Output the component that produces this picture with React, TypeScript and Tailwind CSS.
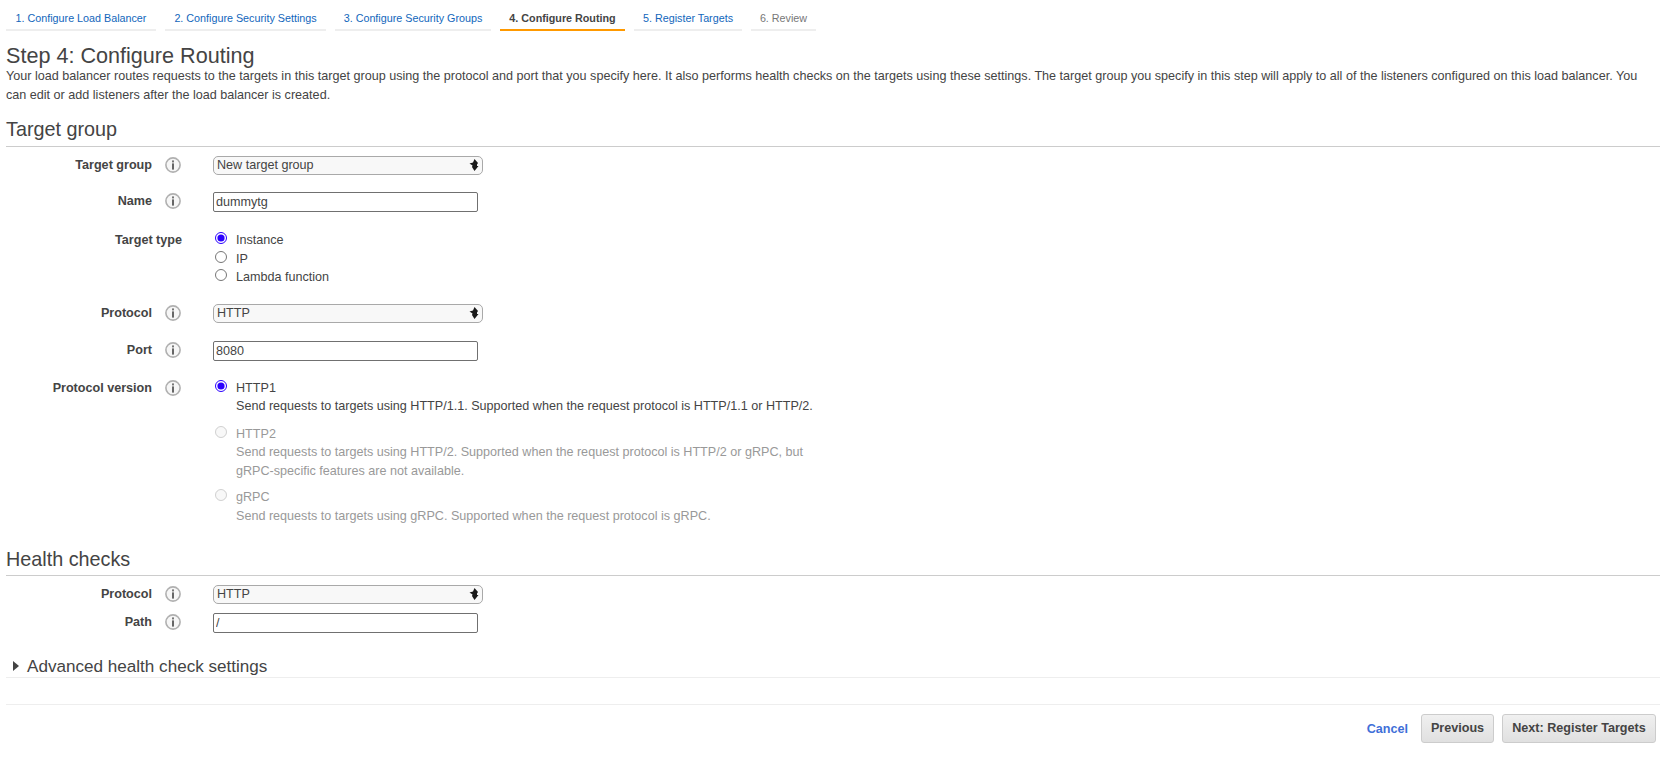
import type { ReactNode } from "react";

const tabs = [
  { label: "1. Configure Load Balancer", width: "w-[150px]" },
  { label: "2. Configure Security Settings", width: "w-[161px]" },
  { label: "3. Configure Security Groups", width: "w-[156px]" },
  { label: "4. Configure Routing", width: "w-[125px]", active: true },
  { label: "5. Register Targets", width: "w-[108px]" },
  { label: "6. Review", width: "w-[65px]", disabled: true },
];

function InfoIcon() {
  return (
    <svg width="16" height="16" viewBox="0 0 16 16" className="shrink-0">
      <circle cx="8" cy="8" r="7.1" fill="#f6f6f6" stroke="#b0b0b0" strokeWidth="1.6" />
      <rect x="7" y="3.4" width="2" height="2" fill="#777777" />
      <rect x="7" y="6.4" width="2" height="6.2" fill="#666666" />
    </svg>
  );
}

function Label({ text, info = true }: { text: string; info?: boolean }) {
  return (
    <div className="flex w-[207px] shrink-0 items-start">
      <span className={`${info ? "w-[146px]" : "w-[176px]"} text-right text-[12.6px] leading-[18px] font-bold`}>{text}</span>
      {info && (
        <span className="ml-[13px] mt-[1px]">
          <InfoIcon />
        </span>
      )}
    </div>
  );
}

function Select({ value }: { value: string }) {
  return (
    <div className="relative h-[19px] w-[270px]">
      <select
        value={value}
        onChange={() => {}}
        className="block h-full w-full appearance-none rounded-[5px] border border-[#a9a9a9] bg-[#f8f8f8] pl-[3px] text-[12.6px] leading-[15px] text-[#444444]"
      >
        <option>{value}</option>
      </select>
      {/* native up/down arrow */}
      <svg width="10" height="12" viewBox="0 0 10 12" className="pointer-events-none absolute right-[4px] top-[3px]">
        <path d="M5.5 0 L9 4 L8 5.5 L8 7 L9.5 7 L5.5 12 L3 8 L3.5 6.5 L0.5 4.5 L4 3.5 Z" fill="#1a1a1a" />
      </svg>
    </div>
  );
}

function TextInput({ value }: { value: string }) {
  return (
    <input
      value={value}
      readOnly
      className="h-[20px] w-[265px] rounded-[2px] border border-[#707070] bg-white px-[2px] text-[12.6px] text-[#444444] outline-none"
    />
  );
}

function Radio({ checked, disabled, children }: { checked?: boolean; disabled?: boolean; children: ReactNode }) {
  return (
    <label className={`flex items-start ${disabled ? "text-[#999999]" : ""}`}>
      <input
        type="radio"
        checked={!!checked}
        disabled={disabled}
        readOnly
        className="ml-[2px] mr-[9px] mt-[1px] h-[12px] w-[12px] shrink-0 accent-[#2a00ff]"
      />
      <div className="text-[12.6px] leading-[18.5px]">{children}</div>
    </label>
  );
}

export default function App() {
  return (
    <div className="h-[758px] overflow-hidden bg-white pl-[6px] pr-[4px] text-[#444444] [font-family:'Liberation_Sans',Arial,sans-serif]">
      {/* Wizard steps */}
      <div className="flex gap-[9px] pt-[10px]">
        {tabs.map((t) => (
          <div
            key={t.label}
            className={`h-[21px] pt-[1px] text-center text-[10.75px] leading-[15px] whitespace-nowrap border-b-2 ${t.width} ${
              t.active
                ? "border-[#ff9900] font-bold text-[#444444]"
                : t.disabled
                  ? "border-[#eeeeee] text-[#777777]"
                  : "border-[#eeeeee] text-[#1166bb]"
            }`}
          >
            {t.label}
          </div>
        ))}
      </div>

      <h1 className="mt-[13px] text-[21.6px] leading-[23px] font-normal">Step 4: Configure Routing</h1>
      <p className="text-[12.6px] leading-[18.5px]">
        Your load balancer routes requests to the targets in this target group using the protocol and port that you specify here. It also performs health checks on the targets using these settings. The target group you specify in this step will apply to all of the listeners configured on this load balancer. You can edit or add listeners after the load balancer is created.
      </p>

      <h2 className="mt-[12px] border-b border-[#cccccc] pb-[3px] text-[19.8px] leading-[27px] font-normal">Target group</h2>

      <div className="mt-[9px] flex">
        <Label text="Target group" />
        <Select value="New target group" />
      </div>
      <div className="mt-[17px] flex">
        <Label text="Name" />
        <TextInput value="dummytg" />
      </div>
      <div className="mt-[19px] flex">
        <Label text="Target type" info={false} />
        <div className="flex flex-col">
          <Radio checked>Instance</Radio>
          <Radio>IP</Radio>
          <Radio>Lambda function</Radio>
        </div>
      </div>
      <div className="mt-[17px] flex">
        <Label text="Protocol" />
        <Select value="HTTP" />
      </div>
      <div className="mt-[18px] flex">
        <Label text="Port" />
        <TextInput value="8080" />
      </div>
      <div className="mt-[18px] flex">
        <Label text="Protocol version" />
        <div className="flex flex-col">
          <Radio checked>
            HTTP1
            <br />
            Send requests to targets using HTTP/1.1. Supported when the request protocol is HTTP/1.1 or HTTP/2.
          </Radio>
          <div className="mt-[9px]">
            <Radio disabled>
              HTTP2
              <br />
              Send requests to targets using HTTP/2. Supported when the request protocol is HTTP/2 or gRPC, but
              <br />
              gRPC-specific features are not available.
            </Radio>
          </div>
          <div className="mt-[8px]">
            <Radio disabled>
              gRPC
              <br />
              Send requests to targets using gRPC. Supported when the request protocol is gRPC.
            </Radio>
          </div>
        </div>
      </div>

      <h2 className="mt-[21px] border-b border-[#cccccc] pb-[2px] text-[19.8px] leading-[27px] font-normal">Health checks</h2>
      <div className="mt-[9px] flex">
        <Label text="Protocol" />
        <Select value="HTTP" />
      </div>
      <div className="mt-[9px] flex">
        <Label text="Path" />
        <TextInput value="/" />
      </div>

      <div className="mt-[24px] flex items-center border-b border-[#eeeeee] text-[17.1px] leading-[20px]">
        <svg width="8" height="10" viewBox="0 0 8 10" className="ml-[6px] mr-[7px] -mt-[2px]">
          <path d="M1 0 L7 5 L1 10 Z" fill="#444444" />
        </svg>
        Advanced health check settings
      </div>

      {/* Footer actions */}
      <div className="mt-[26px] flex items-center justify-end gap-[8px] border-t border-[#eeeeee] pt-[9px]">
        <a className="text-[12.6px] leading-[18px] font-bold text-[#3f6fd8]">Cancel</a>
        <button className="ml-[5px] h-[29px] w-[73px] rounded-[3px] border border-[#cccccc] bg-gradient-to-b from-[#f0f0f0] to-[#e0e0e0] text-[12.6px] font-bold text-[#444444]">
          Previous
        </button>
        <button className="mr-[4px] h-[29px] w-[154px] rounded-[3px] border border-[#cccccc] bg-gradient-to-b from-[#f0f0f0] to-[#e0e0e0] text-[12.6px] font-bold text-[#444444]">
          Next: Register Targets
        </button>
      </div>
    </div>
  );
}
